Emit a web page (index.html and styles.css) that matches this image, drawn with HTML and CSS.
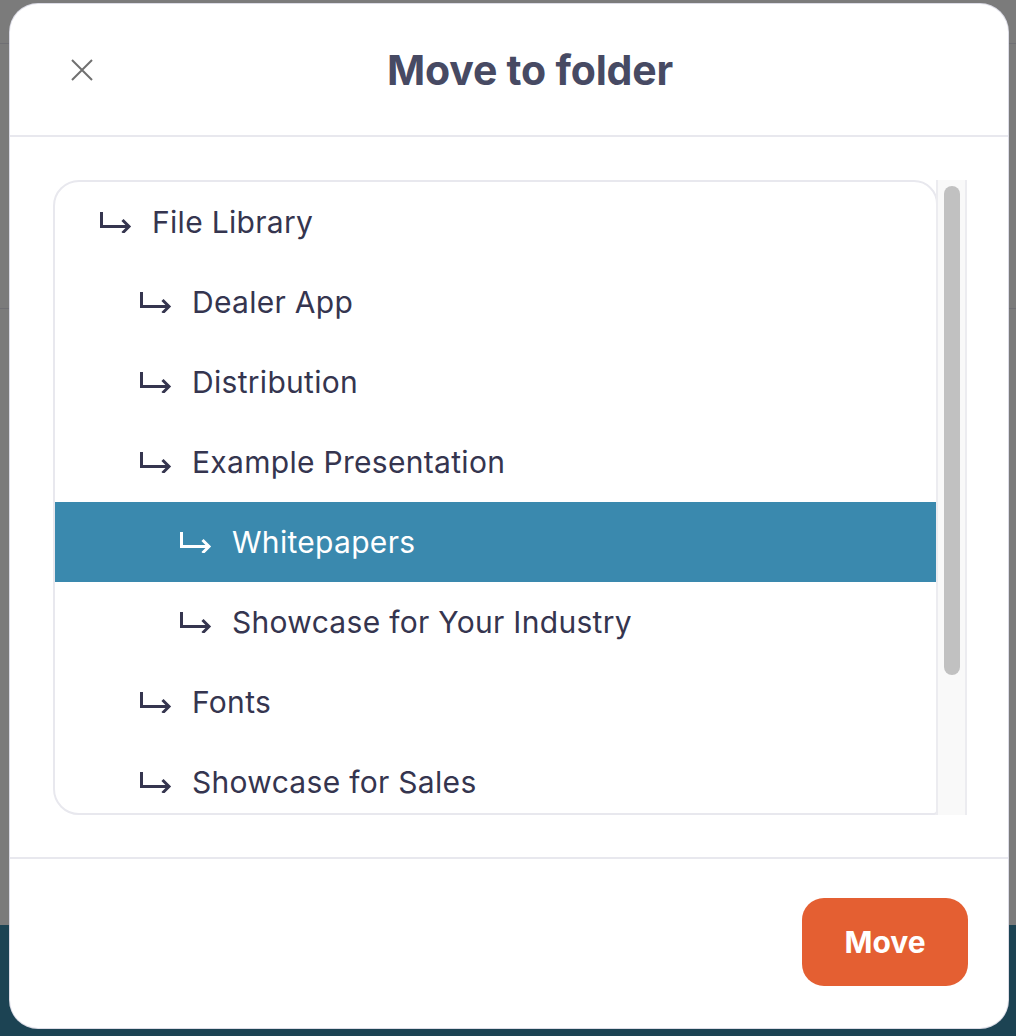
FILE: index.html
```html
<!DOCTYPE html>
<html lang="en">
<head>
  <meta charset="UTF-8">
  <title>Move to folder</title>
  <meta name="viewport" content="width=device-width, initial-scale=1.0">
  <link rel="stylesheet" href="styles.css">
</head>
<body>
  <div class="modal">
    <div class="modal-header">
      <button class="close" aria-label="Close">
        <svg width="22" height="22" viewBox="0 0 22 22"><path d="M1 1 L21 21 M21 1 L1 21" stroke="#707070" stroke-width="2" fill="none"/></svg>
      </button>
      <h1>Move to folder</h1>
    </div>

    <div class="modal-body">
      <div class="picker">
        <ul class="tree">
          <li class="row level-0"><svg class="arrow" viewBox="0 0 32 24"><path d="M1.5 3 V17.5 H29 M22.5 11 L29 17.5 L22.5 24" fill="none" stroke="currentColor" stroke-width="3"/></svg>File Library</li>
          <li class="row level-1"><svg class="arrow" viewBox="0 0 32 24"><path d="M1.5 3 V17.5 H29 M22.5 11 L29 17.5 L22.5 24" fill="none" stroke="currentColor" stroke-width="3"/></svg>Dealer App</li>
          <li class="row level-1"><svg class="arrow" viewBox="0 0 32 24"><path d="M1.5 3 V17.5 H29 M22.5 11 L29 17.5 L22.5 24" fill="none" stroke="currentColor" stroke-width="3"/></svg>Distribution</li>
          <li class="row level-1"><svg class="arrow" viewBox="0 0 32 24"><path d="M1.5 3 V17.5 H29 M22.5 11 L29 17.5 L22.5 24" fill="none" stroke="currentColor" stroke-width="3"/></svg>Example Presentation</li>
          <li class="row level-2 selected"><svg class="arrow" viewBox="0 0 32 24"><path d="M1.5 3 V17.5 H29 M22.5 11 L29 17.5 L22.5 24" fill="none" stroke="currentColor" stroke-width="3"/></svg>Whitepapers</li>
          <li class="row level-2"><svg class="arrow" viewBox="0 0 32 24"><path d="M1.5 3 V17.5 H29 M22.5 11 L29 17.5 L22.5 24" fill="none" stroke="currentColor" stroke-width="3"/></svg>Showcase for Your Industry</li>
          <li class="row level-1"><svg class="arrow" viewBox="0 0 32 24"><path d="M1.5 3 V17.5 H29 M22.5 11 L29 17.5 L22.5 24" fill="none" stroke="currentColor" stroke-width="3"/></svg>Fonts</li>
          <li class="row level-1"><svg class="arrow" viewBox="0 0 32 24"><path d="M1.5 3 V17.5 H29 M22.5 11 L29 17.5 L22.5 24" fill="none" stroke="currentColor" stroke-width="3"/></svg>Showcase for Sales</li>
        </ul>
        <div class="scrollbar"><div class="thumb"></div></div>
      </div>
    </div>

    <div class="modal-footer">
      <button class="move">Move</button>
    </div>
  </div>
</body>
</html>
```

FILE: styles.css
```css
html, body {
  height: 100%;
}

body {
  margin: 0;
  padding: 4px 8px 8px 10px;
  box-sizing: border-box;
  font-family: Inter, "Noto Sans", sans-serif;
  background: linear-gradient(to bottom,
    #7b7b7b 0, #7b7b7b 43px,
    #6f6f74 43px, #6f6f74 44px,
    #7b7b7b 44px, #7b7b7b 308px,
    #6f6f74 308px, #6f6f74 309px,
    #7b7b7b 309px, #7b7b7b 925px,
    #1c4353 925px);
}

.modal {
  height: 1024px;
  background: #fff;
  border-radius: 28px;
  box-shadow: 0 0 0 1px #dcdce6;
  display: flex;
  flex-direction: column;
  overflow: hidden;
}

.modal-header {
  height: 131px;
  padding-left: 42px;
  border-bottom: 2px solid #e8e8ee;
  display: flex;
  align-items: center;
  justify-content: center;
  position: relative;
}

.modal-header h1 {
  margin: 0;
  font-size: 41px;
  font-weight: 700;
  color: #474a63;
  letter-spacing: -0.2px;
}

.close {
  position: absolute;
  left: 61px;
  top: 55px;
  padding: 0;
  border: none;
  background: none;
  width: 22px;
  height: 22px;
  cursor: pointer;
}

.modal-body {
  padding: 43px 41px 42px 43px;
  border-bottom: 2px solid #e8e8ee;
}

.picker {
  display: flex;
  height: 635px;
}

.tree {
  flex: 1;
  margin: 0;
  padding: 0;
  list-style: none;
  border: 2px solid #e8e8ee;
  border-radius: 26px 24px 4px 26px;
  overflow: hidden;
}

.row {
  height: 80px;
  display: flex;
  align-items: center;
  font-size: 30px;
  letter-spacing: 0.3px;
  color: #35354f;
  margin-right: -2px;
}

.row.level-0 { padding-left: 45px; }
.row.level-1 { padding-left: 85px; }
.row.level-2 { padding-left: 125px; }

.row.selected {
  background: #3a89ae;
  color: #fff;
}

.arrow {
  width: 32px;
  height: 24px;
  margin-right: 20px;
  margin-top: -2px;
  flex-shrink: 0;
}

.scrollbar {
  width: 31px;
  margin-left: -2px;
  padding: 6px 4px 0 6px;
  box-sizing: border-box;
  background: #f9f9f9;
  border-left: 2px solid #ececf0;
  border-right: 2px solid #ececf0;
}

.thumb {
  width: 16px;
  height: 489px;
  background: #c1c1c1;
  border-radius: 8px;
}

.modal-footer {
  flex: 1;
  display: flex;
  justify-content: flex-end;
  align-items: flex-start;
  padding: 39px 40px 0 0;
}

.move {
  width: 166px;
  height: 88px;
  border: none;
  border-radius: 22px;
  background: #e45f32;
  color: #fff;
  font-family: Inter, "Noto Sans", sans-serif;
  font-size: 30px;
  font-weight: 700;
  cursor: pointer;
}
```
